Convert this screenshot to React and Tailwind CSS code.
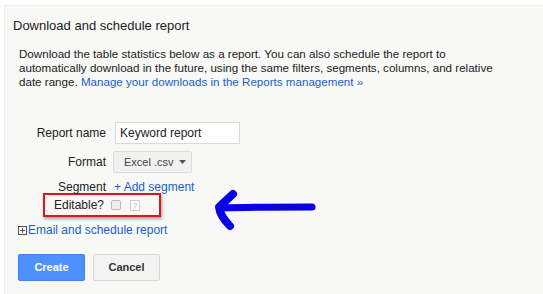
export default function App() {
  return (
    <div className="w-[543px] h-[294px] bg-white pt-[5px] pl-[4px] overflow-hidden" style={{ fontFamily: '"Liberation Sans", Arial, sans-serif' }}>
      <div className="relative h-[289px] bg-[#f8f8f6] border-t border-l border-[#eeeeec] pl-[10px] pt-[11px] text-[#222]">
        <div className="text-[13px] leading-[18px] -ml-[2px]">Download and schedule report</div>
        <div className="mt-[12px] ml-[4px] text-[11.6px] leading-[14px] w-[490px]">
          Download the table statistics below as a report. You can also schedule the report to automatically download in the future, using the same filters, segments, columns, and relative date range. <span className="text-[#1a5fc6]">Manage your downloads in the Reports management »</span>
        </div>
        <div className="mt-[33px] text-[12px]">
          <div className="flex items-center h-[22px]">
            <div className="w-[91px] text-right">Report name</div>
            <div className="ml-[9px] w-[125px] h-[22px] bg-white border border-[#d9d9d9] flex items-center pl-[4px]">Keyword report</div>
          </div>
          <div className="flex items-center h-[22px] mt-[7px]">
            <div className="w-[91px] text-right">Format</div>
            <div className="ml-[7px] w-[79px] h-[22px] bg-[#f1f1f1] border border-[#dcdcdc] rounded-[2px] flex items-center pl-[10px] text-[11px] text-[#444]">
              Excel .csv
              <svg width="7" height="4" viewBox="0 0 7 4" className="ml-[5px]"><path d="M0 0H7L3.5 4Z" fill="#555" /></svg>
            </div>
          </div>
          <div className="flex items-center h-[16px] mt-[6px]">
            <div className="w-[91px] text-right">Segment</div>
            <div className="ml-[8px] text-[#1a5fc6]">+ Add segment</div>
          </div>
          <div className="ml-[28px] -mt-[2px] w-[118px] h-[24px] border-2 border-[#e0141a] shadow-[1px_2px_3px_rgba(0,0,0,0.35)] flex items-center">
            <div className="w-[59px] text-right">Editable?</div>
            <div className="ml-[7px] w-[10px] h-[10px] border border-[#bbb] rounded-[2px] bg-[#eee]"></div>
            <div className="ml-[9px] w-[10px] h-[11px] border border-[#ccc] bg-white text-[8px] leading-[9px] text-center text-[#aaa]">?</div>
          </div>
          <div className="flex items-center mt-[4px] ml-[3px]">
            <div className="w-[9px] h-[9px] border border-[#555] relative">
              <div className="absolute left-[1px] right-[1px] top-[3px] h-[1px] bg-[#555]"></div>
              <div className="absolute top-[1px] bottom-[1px] left-[3px] w-[1px] bg-[#555]"></div>
            </div>
            <span className="text-[#1a5fc6] ml-[1px] text-[12px]">Email and schedule report</span>
          </div>
          <div className="flex mt-[15px] ml-[3px] gap-[8px]">
            <div className="w-[67px] h-[27px] rounded-[2px] bg-[#4d90fe] border border-[#3d82f0] text-white font-bold text-[11px] flex items-center justify-center">Create</div>
            <div className="w-[67px] h-[27px] rounded-[2px] bg-[#f3f3f3] border border-[#d8d8d8] text-[#333] font-bold text-[11px] flex items-center justify-center">Cancel</div>
          </div>
        </div>
        <svg className="absolute left-[203px] top-[182px]" width="110" height="50" viewBox="0 0 110 50">
          <path d="M14 20 Q40 19 104 19" stroke="#0a00e6" strokeWidth="7" strokeLinecap="round" fill="none" />
          <path d="M25 6 L11 19 Q12 28 22 38" stroke="#0a00e6" strokeWidth="8" strokeLinecap="round" strokeLinejoin="round" fill="none" />
        </svg>
      </div>
    </div>
  );
}
